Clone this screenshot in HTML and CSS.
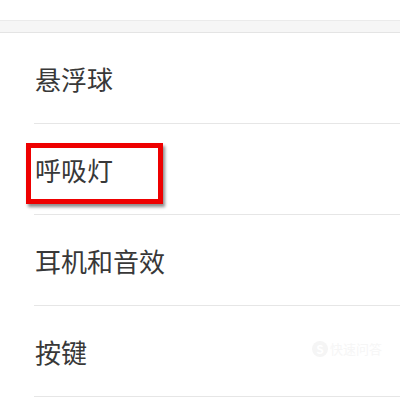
FILE: index.html
```html
<!DOCTYPE html>
<html lang="zh-CN">

<head>
    <meta charset="UTF-8" />
    <title>设置</title>
    <link rel="stylesheet" href="styles.css">
</head>

<body>
    <div class="topSpace"></div>
    <div class="band"></div>
    <ul class="menu">
        <li><span class="label">悬浮球</span></li>
        <li class="marked"><span class="label">呼吸灯</span><div class="redBox"></div></li>
        <li><span class="label">耳机和音效</span></li>
        <li><span class="label">按键</span><div class="mark"><span class="markIcon">S</span>快速问答</div></li>
    </ul>
</body>

</html>
```

FILE: styles.css
```css
body {
    margin: 0;
    background-color: #fff;
    font-family: "Noto Sans CJK SC", "Noto Sans", sans-serif;
    overflow: hidden;
}

.topSpace {
    height: 20px;
    background-color: #fff;
}

.band {
    height: 11px;
    background-color: #f6f6f6;
    border-top: 1px solid #ebebeb;
    border-bottom: 1px solid #e4e4e4;
}

.menu {
    list-style-type: none;
    margin: 0;
    padding: 0 0 0 34px;
}

.menu li {
    position: relative;
    height: 90px;
    display: flex;
    align-items: center;
    border-bottom: 1px solid #e6e6e6;
}

.label {
    font-size: 26px;
    color: #383838;
    margin-left: 1px;
    margin-top: 1px;
}

.redBox {
    position: absolute;
    left: -8px;
    top: 19px;
    width: 127px;
    height: 51px;
    border: 5px solid #ee0000;
    box-shadow: 2px 3px 3px rgba(0, 0, 0, 0.45);
}

.mark {
    position: absolute;
    right: 18px;
    top: 33px;
    display: flex;
    align-items: center;
    gap: 2px;
    font-size: 13px;
    color: #f6f6f6;
}

.markIcon {
    width: 16px;
    height: 16px;
    border-radius: 50%;
    background-color: #f5f5f5;
    color: #fff;
    font-size: 12px;
    font-weight: bold;
    text-align: center;
    line-height: 16px;
}
```
